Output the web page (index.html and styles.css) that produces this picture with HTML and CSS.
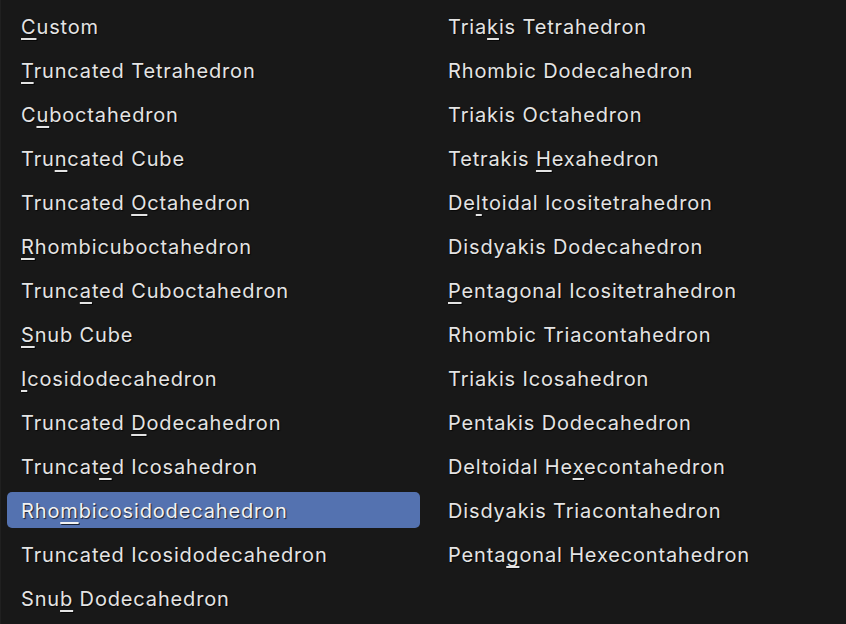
FILE: index.html
```html
<!DOCTYPE html>
<html>
<head>
<meta charset="utf-8">
<link rel="stylesheet" href="styles.css">
</head>
<body>
<div class="menu">
  <div class="col">
    <div class="item"><u>C</u>ustom</div>
    <div class="item"><u>T</u>runcated Tetrahedron</div>
    <div class="item">C<u>u</u>boctahedron</div>
    <div class="item">Tru<u>n</u>cated Cube</div>
    <div class="item">Truncated <u>O</u>ctahedron</div>
    <div class="item"><u>R</u>hombicuboctahedron</div>
    <div class="item">Trunc<u>a</u>ted Cuboctahedron</div>
    <div class="item"><u>S</u>nub Cube</div>
    <div class="item"><u>I</u>cosidodecahedron</div>
    <div class="item">Truncated <u>D</u>odecahedron</div>
    <div class="item">Truncat<u>e</u>d Icosahedron</div>
    <div class="item active">Rho<u>m</u>bicosidodecahedron</div>
    <div class="item">Truncated Icosidodecahedron</div>
    <div class="item">Snu<u>b</u> Dodecahedron</div>
  </div>
  <div class="col">
    <div class="item">Tria<u>k</u>is Tetrahedron</div>
    <div class="item">Rhombic Dodecahedron</div>
    <div class="item">Triakis Octahedron</div>
    <div class="item">Tetrakis <u>H</u>exahedron</div>
    <div class="item">De<u>l</u>toidal Icositetrahedron</div>
    <div class="item">Disdyakis Dodecahedron</div>
    <div class="item"><u>P</u>entagonal Icositetrahedron</div>
    <div class="item">Rhombic Triacontahedron</div>
    <div class="item">Triakis Icosahedron</div>
    <div class="item">Pentakis Dodecahedron</div>
    <div class="item">Deltoidal He<u>x</u>econtahedron</div>
    <div class="item">Disdyakis Triacontahedron</div>
    <div class="item">Penta<u>g</u>onal Hexecontahedron</div>
  </div>
</div>
</body>
</html>
```
FILE: styles.css
```css
html, body {
  margin: 0;
  padding: 0;
  background: #181818;
  overflow: hidden;
}
body {
  width: 846px;
  height: 624px;
  font-family: Inter, "Noto Sans", sans-serif;
}
.menu {
  display: grid;
  grid-template-columns: 413px 413px;
  column-gap: 14px;
  padding: 8px 0 0 6px;
  border-left: 1px solid #202020;
  height: 624px;
  box-sizing: border-box;
}
.col {
  display: flex;
  flex-direction: column;
  gap: 8px;
}
.item {
  height: 36px;
  line-height: 38px;
  padding-left: 14px;
  font-size: 20px;
  letter-spacing: 0.85px;
  color: #e4e4e4;
  white-space: nowrap;
  border-radius: 5px;
  text-shadow: 1px 1px 1px rgba(0, 0, 0, 0.7);
}
.item u {
  text-decoration-thickness: 2px;
  text-underline-offset: 4px;
}
.active {
  background: #5472b0;
  color: #f2f2f2;
}
```
